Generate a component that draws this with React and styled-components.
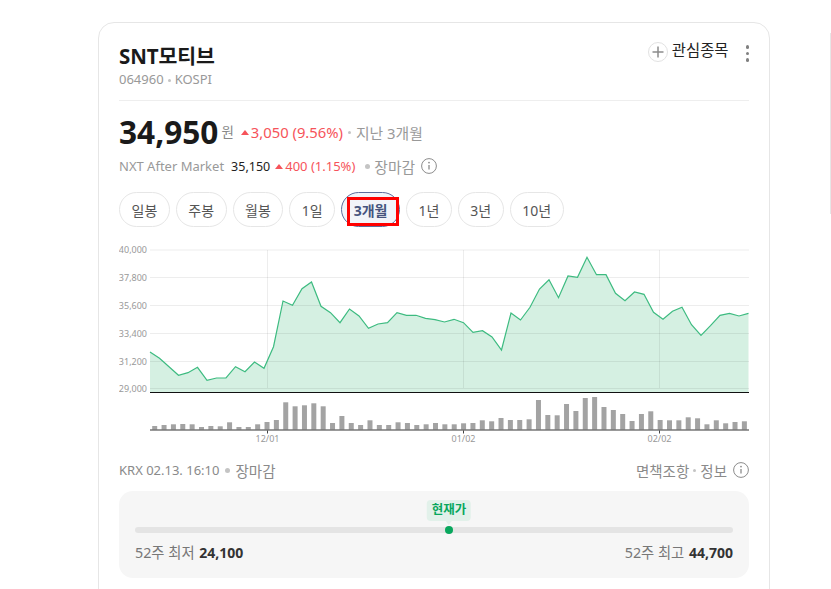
import React from 'react';
import styled, { createGlobalStyle } from 'styled-components';

const GlobalStyle = createGlobalStyle`
  html, body {
    margin: 0;
    height: 100%;
    background: #fff;
    overflow: hidden;
  }
  body {
    font-family: "Noto Sans", "Noto Sans CJK KR", sans-serif;
    color: #222;
  }
`;

// Chart data, in page pixels read off the picture
const LINE_Y = [
  352, 358.3, 366.7, 375.3, 372.7, 367.3, 380.3, 378, 378, 366.7, 371.7, 362, 368.3, 346.7, 301, 305.3,
  288.7, 282, 306.3, 312.7, 322.7, 309, 316, 328.3, 324, 322.7, 312.7, 315.3, 315.3, 318.3, 319.7, 322,
  319.3, 322.7, 332.3, 330.7, 337, 350, 313, 320, 307.3, 289, 279.7, 297.7, 276, 277.3, 257.3, 274.7,
  274.7, 293.3, 300.7, 292, 294.3, 312.3, 319.3, 311.3, 307.3, 324.7, 335.3, 325.7, 315.3, 313.3, 316, 313.3,
];
const BAR_TOP = [
  426, 425, 424.3, 424, 424.3, 427, 426, 426.3, 422.3, 427, 427, 424.3, 422, 420, 402.3, 406.3,
  405.3, 403.3, 406.3, 423, 416, 423, 425, 420.3, 425, 425, 422.3, 423, 425, 424.3, 423, 424.3,
  424.3, 423.3, 423, 420.3, 421.3, 418, 420, 420, 419.3, 400, 415, 415.3, 404, 411, 398, 397,
  407, 410, 414, 421, 414, 411.3, 420, 420.3, 420.3, 417.3, 418.3, 424.3, 420.3, 423.3, 422, 421.3,
];
const GRID = [
  { y: 250, label: '40,000' },
  { y: 277.5, label: '37,800' },
  { y: 305.5, label: '35,600' },
  { y: 333.5, label: '33,400' },
  { y: 361.5, label: '31,200' },
  { y: 388.5, label: '29,000' },
];
const MONTHS = [
  { x: 267.5, label: '12/01' },
  { x: 463.5, label: '01/02' },
  { x: 659.5, label: '02/02' },
];
const PERIODS = ['일봉', '주봉', '월봉', '1일', '3개월', '1년', '3년', '10년'];

const stepX = i => 150 + i * 9.5;
const barX = i => 152.2 + i * 9.36;
const linePoints = LINE_Y.map((y, i) => `${stepX(i)},${y}`).join(' ');

const Page = styled.div`
  display: flex;
  align-items: flex-start;
  gap: 60px;
  height: 589px;
  padding: 22px 0 0 98px;
  box-sizing: border-box;
  overflow: hidden;
`;

const Card = styled.section`
  flex: none;
  width: 672px;
  height: 640px;
  box-sizing: border-box;
  padding: 20px 20px 0;
  border: 1px solid #e6e6e6;
  border-radius: 16px;
`;

const SideCard = styled.div`
  flex: none;
  width: 300px;
  height: 181px;
  margin-top: 11px;
  border-left: 1px solid #e6e6e6;
`;

const Header = styled.header`
  display: flex;
  justify-content: space-between;
  height: 57px;
  border-bottom: 1px solid #eee;
`;

const Title = styled.h1`
  margin: 0;
  font-size: 20.5px;
  line-height: 26px;
  font-weight: 700;
  color: #1a1a1a;
  letter-spacing: -0.1px;
`;

const Code = styled.div`
  margin-top: 1px;
  font-size: 13px;
  line-height: 18px;
  color: #999;
`;

const Actions = styled.div`
  display: flex;
  align-items: flex-start;
  height: 20px;
  margin-top: -1px;
`;

const PlusCircle = styled.span`
  display: flex;
  align-items: center;
  justify-content: center;
  width: 18px;
  height: 18px;
  border: 1px solid #e2e2e2;
  border-radius: 50%;
  color: #8c8c8c;
`;

const Watch = styled.span`
  margin: -1px 0 0 4px;
  font-size: 15.4px;
  line-height: 20px;
  color: #222;
`;

const More = styled.span`
  display: flex;
  flex-direction: column;
  gap: 3px;
  margin: 3px 0 0 17px;

  > i {
    width: 3.5px;
    height: 3.5px;
    border-radius: 50%;
    background: #808080;
  }
`;

const PriceRow = styled.div`
  display: flex;
  align-items: center;
  margin-top: 11px;
  height: 40px;
`;

const Price = styled.strong`
  font-size: 31.6px;
  line-height: 40px;
  font-weight: 700;
  color: #1a1a1a;
`;

const Unit = styled.span`
  margin: 0 0 2px 3px;
  font-size: 13.5px;
  color: #888;
`;

const Up = styled.span`
  display: inline-flex;
  align-items: center;
  margin-left: ${props => props.$gap || 0}px;
  font-size: ${props => props.$size || 14.8}px;
  color: #f6535a;

  &::before {
    content: '';
    width: 0;
    height: 0;
    margin-right: 2px;
    border-left: 4px solid transparent;
    border-right: 4px solid transparent;
    border-bottom: 5px solid #f6535a;
  }
`;

const Muted = styled.span`
  font-size: 14.8px;
  color: #999;
`;

const Dot = styled.span`
  display: inline-block;
  flex: none;
  width: ${props => props.$size || 5}px;
  height: ${props => props.$size || 5}px;
  margin: 0 ${props => props.$right || 4}px 0 ${props => props.$left || 4}px;
  border-radius: 50%;
  background: #c4c4c4;
  vertical-align: middle;
`;

const AfterRow = styled.div`
  display: flex;
  align-items: center;
  height: 20px;
  margin-top: 4px;
  font-size: 13px;
  color: #999;
`;

const AfterPrice = styled.span`
  margin-left: 7px;
  font-size: 12.5px;
  color: #222;
`;

// Hangul labels run a little wider than the Latin beside them
const Hangul = styled.span`
  font-size: ${props => props.$size || 14.5}px;
`;

const InfoWrap = styled.svg`
  display: block;
  flex: none;
  margin-left: 6px;
  color: #8c8c8c;
`;

const Pills = styled.div`
  display: flex;
  gap: 6px;
  margin-top: 16px;
`;

const Pill = styled.button`
  position: relative;
  height: 35px;
  padding: 0 11.5px;
  border: 1px solid ${props => props.$active ? '#5d6d9c' : '#e6e6e6'};
  border-radius: 18px;
  background: ${props => props.$active ? '#f2f4f9' : '#fff'};
  color: ${props => props.$active ? '#46547e' : '#555'};
  font-family: inherit;
  font-size: 14px;
  font-weight: ${props => props.$active ? 700 : 400};
`;

const Highlight = styled.span`
  position: absolute;
  top: 4px;
  left: 5px;
  right: 0;
  bottom: 0;
  border: 3px solid #f00;
  pointer-events: none;
`;

const Chart = styled.svg`
  display: block;
  margin-top: 13px;
`;

const ChartLabel = styled.text`
  font-family: "Noto Sans", sans-serif;
  font-size: 9px;
  fill: #999;
`;

const Footer = styled.div`
  display: flex;
  justify-content: space-between;
  align-items: center;
  height: 20px;
  margin-top: 10px;
  font-size: 13px;
  color: #8a8a8a;
`;

const FooterPart = styled.div`
  display: flex;
  align-items: center;
`;

const Range = styled.div`
  box-sizing: border-box;
  height: 87px;
  margin-top: 11px;
  padding: 36px 16px 0;
  border-radius: 14px;
  background: #f6f6f6;
`;

const Track = styled.div`
  position: relative;
  height: 6px;
  border-radius: 3px;
  background: #e4e4e4;
`;

const Thumb = styled.span`
  position: absolute;
  top: -1px;
  width: 8px;
  height: 8px;
  margin-left: -4px;
  border-radius: 50%;
  background: #08a75d;
`;

const Bubble = styled.span`
  position: absolute;
  bottom: 12px;
  padding: 0 5px;
  height: 21px;
  line-height: 20px;
  border-radius: 4px;
  background: #e2f1ea;
  color: #08a75d;
  font-size: 12.5px;
  font-weight: 700;
  white-space: nowrap;
  transform: translateX(-50%);

  &::after {
    content: '';
    position: absolute;
    left: 50%;
    top: 100%;
    margin-left: -3px;
    border-left: 3px solid transparent;
    border-right: 3px solid transparent;
    border-top: 4px solid #e2f1ea;
  }
`;

const RangeLabels = styled.div`
  display: flex;
  justify-content: space-between;
  margin-top: 10px;
  font-size: 14.3px;
  line-height: 20px;
  color: #777;

  b {
    margin-left: 1px;
    color: #333;
    font-size: 14px;
    font-weight: 700;
  }
`;

const InfoIcon = () => (
  <InfoWrap width="16" height="16" viewBox="0 0 16 16" fill="none" stroke="currentColor">
    <circle cx="8" cy="8" r="7.4" />
    <path d="M8 7v4.6" strokeWidth="1.3" />
    <circle cx="8" cy="4.6" r="0.9" fill="currentColor" stroke="none" />
  </InfoWrap>
);

const PriceChart = () => (
  <Chart width="631" height="210" viewBox="119 240 631 210">
    <polygon points={`150,392 ${linePoints} 748.5,392`} fill="#d5f0e2" />
    {GRID.map(g => (
      <g key={g.label}>
        <line x1="150" x2="749" y1={g.y} y2={g.y} stroke="#000" strokeOpacity="0.07" />
        <ChartLabel x="147" y={g.y + 3} textAnchor="end">{g.label}</ChartLabel>
      </g>
    ))}
    {MONTHS.map(m => (
      <g key={m.label}>
        <line x1={m.x} x2={m.x} y1="250" y2="388" stroke="#000" strokeOpacity="0.07" />
        <line x1={m.x} x2={m.x} y1="430" y2="433.5" stroke="#444" />
        <ChartLabel x={m.x} y="442" textAnchor="middle">{m.label}</ChartLabel>
      </g>
    ))}
    <polyline points={linePoints} fill="none" stroke="#3dbb80" strokeWidth="1.2" />
    <line x1="150" x2="749" y1="392.5" y2="392.5" stroke="#111" />
    {BAR_TOP.map((top, i) => (
      <rect key={i} x={barX(i)} y={top} width="5" height={430 - top} fill="#a3a3a3" />
    ))}
    <line x1="150" x2="749" y1="430" y2="430" stroke="#777" strokeWidth="1.5" />
  </Chart>
);

const App = () => (
  <>
    <GlobalStyle />
    <Page>
      <Card>
        <Header>
          <div>
            <Title>SNT모티브</Title>
            <Code>064960<Dot $size={3} />KOSPI</Code>
          </div>
          <Actions>
            <PlusCircle>
              <svg width="12" height="12" viewBox="0 0 12 12" stroke="currentColor" strokeWidth="1.5">
                <path d="M6 0.5v11M0.5 6h11" />
              </svg>
            </PlusCircle>
            <Watch>관심종목</Watch>
            <More><i /><i /><i /></More>
          </Actions>
        </Header>

        <PriceRow>
          <Price>34,950</Price>
          <Unit>원</Unit>
          <Up $gap={7}>3,050 (9.56%)</Up>
          <Dot $size={3} $left={5} $right={5} />
          <Muted>지난 3개월</Muted>
        </PriceRow>

        <AfterRow>
          NXT After Market
          <AfterPrice>35,150</AfterPrice>
          <Up $gap={5} $size={13}>400 (1.15%)</Up>
          <Dot $left={10} />
          <Hangul $size={14.8}>장마감</Hangul>
          <InfoIcon />
        </AfterRow>

        <Pills>
          {PERIODS.map(p => (
            <Pill key={p} $active={p === '3개월'}>
              {p}
              {p === '3개월' && <Highlight />}
            </Pill>
          ))}
        </Pills>

        <PriceChart />

        <Footer>
          <FooterPart>KRX 02.13. 16:10<Dot $left={6} $right={5} /><Hangul>장마감</Hangul></FooterPart>
          <FooterPart><Hangul>면책조항</Hangul><Dot $size={3} /><Hangul>정보</Hangul><InfoIcon /></FooterPart>
        </Footer>

        <Range>
          <Track>
            <Bubble style={{ left: '52.5%' }}>현재가</Bubble>
            <Thumb style={{ left: '52.5%' }} />
          </Track>
          <RangeLabels>
            <span>52주 최저 <b>24,100</b></span>
            <span>52주 최고 <b>44,700</b></span>
          </RangeLabels>
        </Range>
      </Card>
      <SideCard />
    </Page>
  </>
);

export default App;
